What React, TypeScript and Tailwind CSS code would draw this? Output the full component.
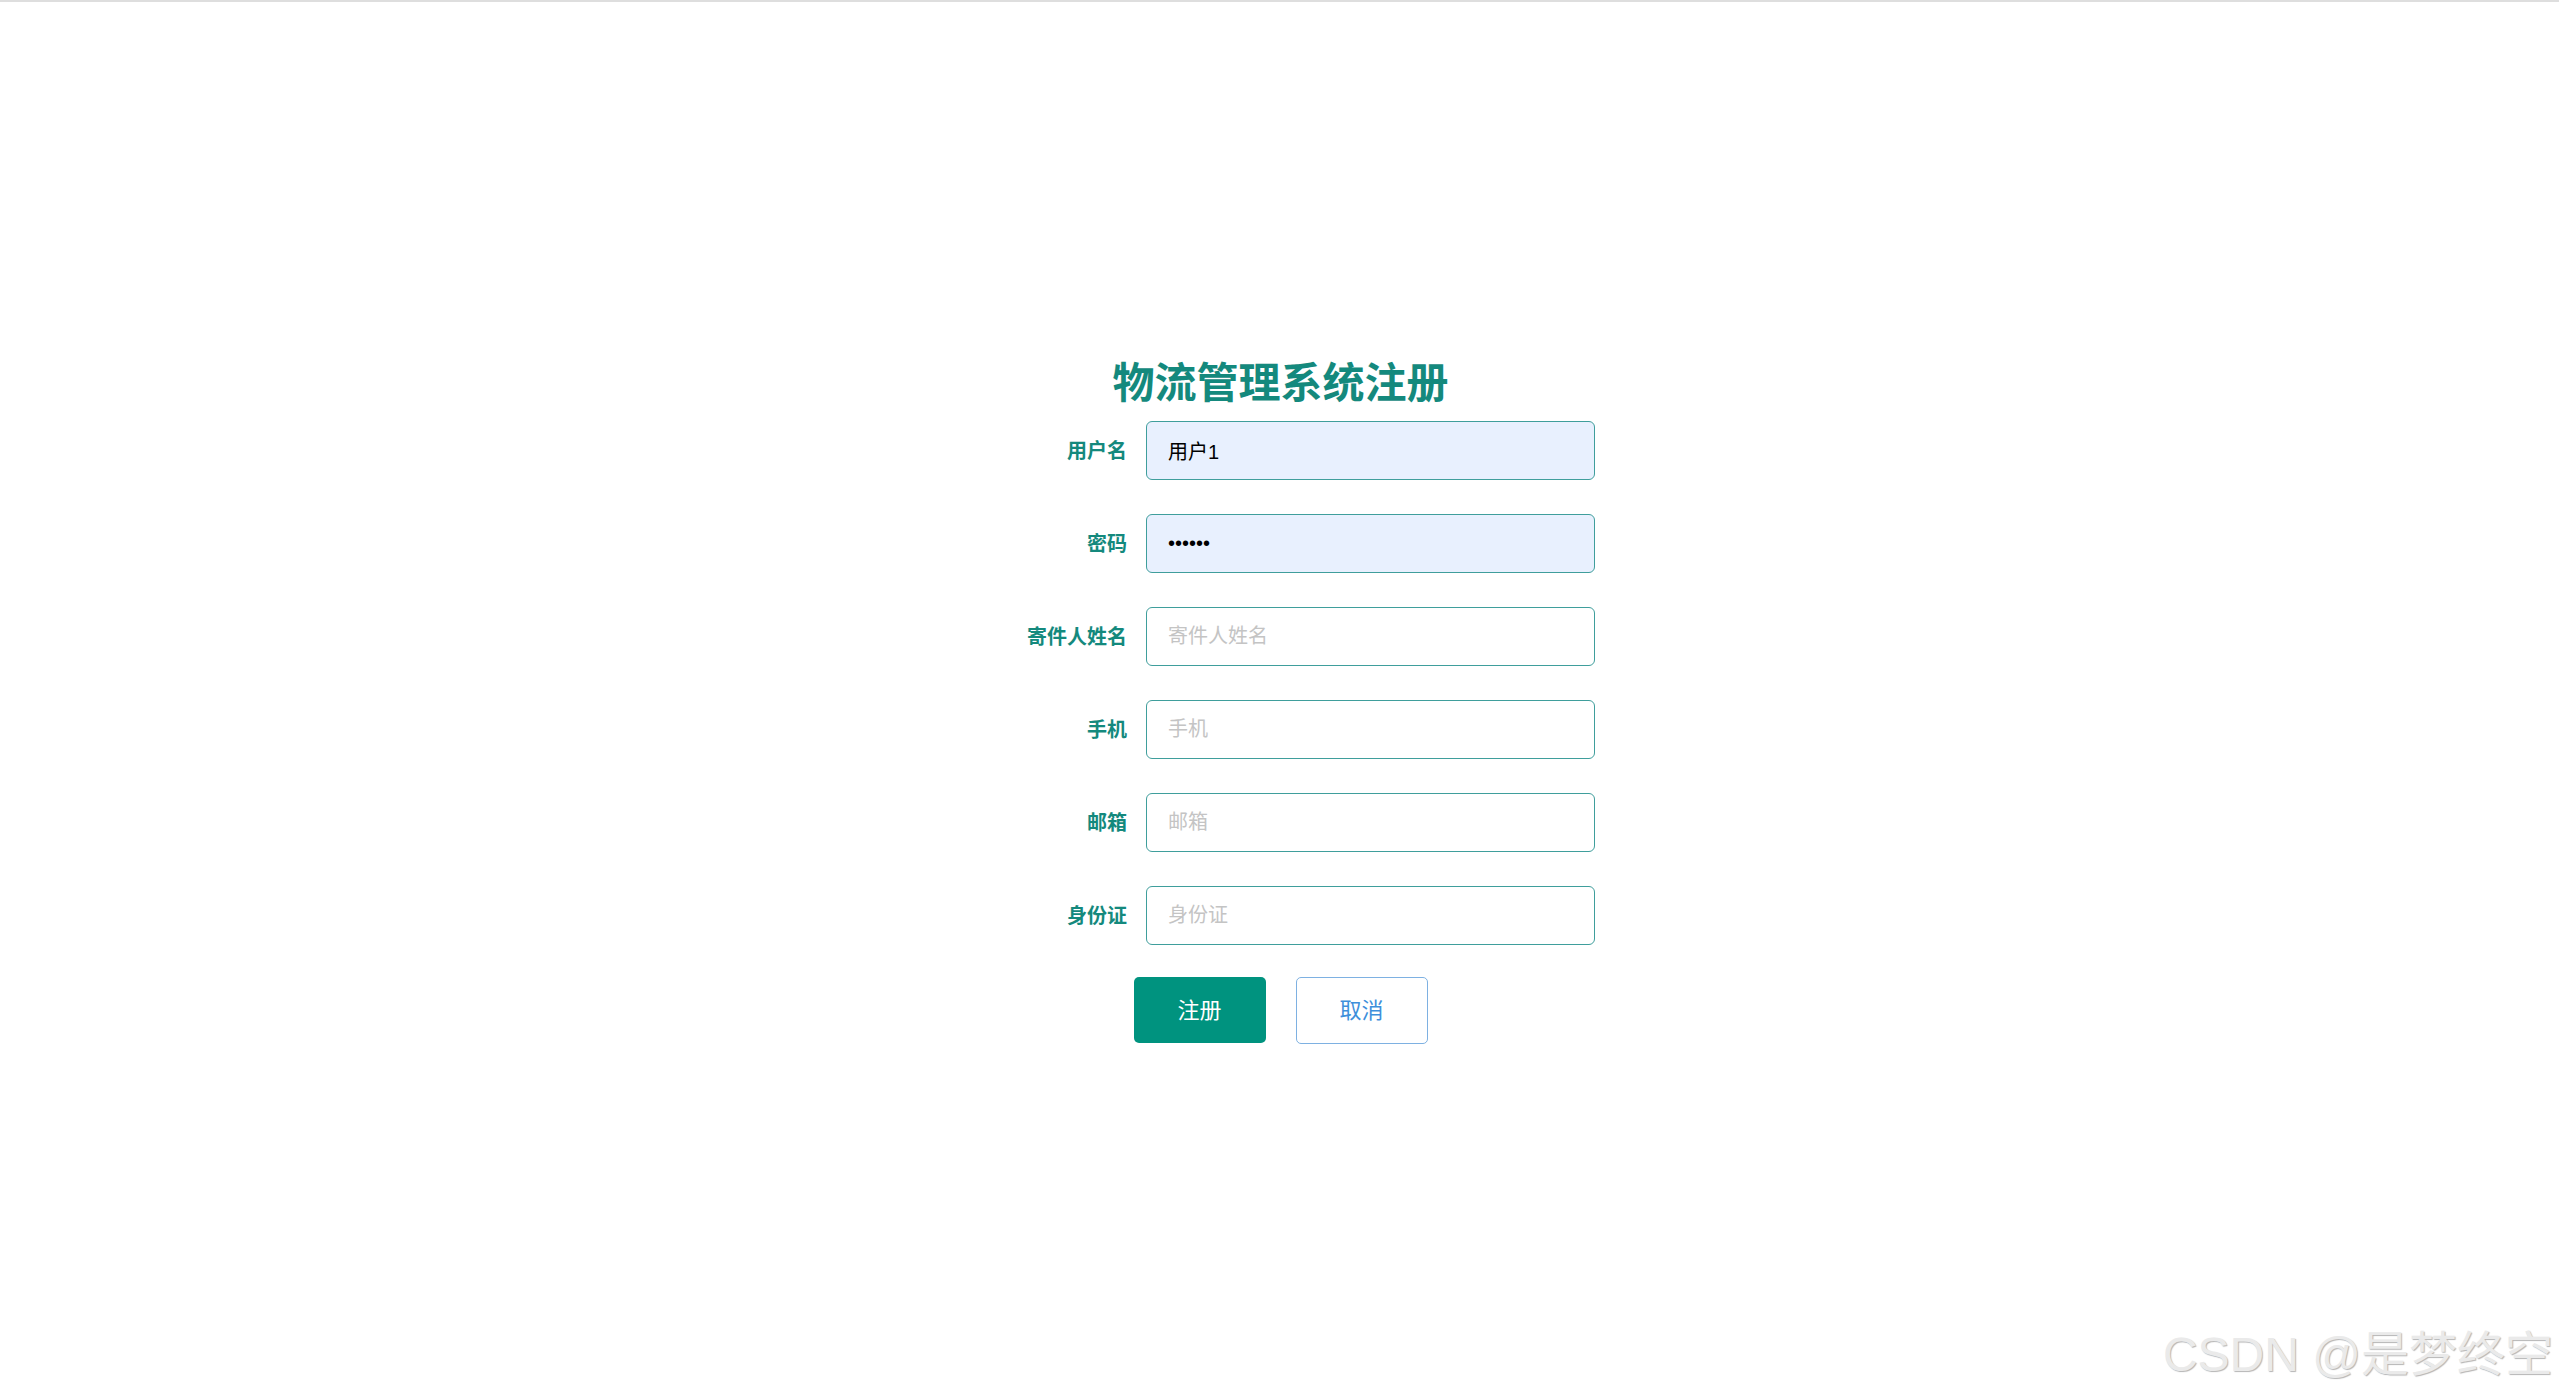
import { useState } from 'react';

const fields = [
  { label: '用户名', placeholder: '用户名', value: '用户1', type: 'text', filled: true },
  { label: '密码', placeholder: '密码', value: '123456', type: 'password', filled: true },
  { label: '寄件人姓名', placeholder: '寄件人姓名', value: '', type: 'text', filled: false },
  { label: '手机', placeholder: '手机', value: '', type: 'text', filled: false },
  { label: '邮箱', placeholder: '邮箱', value: '', type: 'text', filled: false },
  { label: '身份证', placeholder: '身份证', value: '', type: 'text', filled: false },
];

const App = () => {
  const [values, setValues] = useState(fields.map((f) => f.value));

  return (
    <div className="relative h-screen w-full overflow-hidden border-t-2 border-[#dedede] bg-white font-['Liberation_Sans','Noto_Sans_CJK_SC',sans-serif]">
      <div className="flex flex-col items-center pt-[361px]">
        <h1 className="text-[42px] font-bold leading-none text-[#14897d] translate-x-[1px]">
          物流管理系统注册
        </h1>

        <form className="mt-[16px] flex flex-col gap-[34px] translate-x-[27px]" onSubmit={(e) => e.preventDefault()}>
          {fields.map((f, i) => (
            <div key={f.label} className="flex items-center">
              <label className="w-[128px] pr-[19px] text-right text-[20px] font-bold text-[#14897d]">
                {f.label}
              </label>
              <input
                type={f.type}
                value={values[i]}
                placeholder={f.placeholder}
                onChange={(e) => {
                  const next = [...values];
                  next[i] = e.target.value;
                  setValues(next);
                }}
                className={
                  'h-[59px] w-[449px] rounded-[6px] border border-[#3f9e9c] px-[21px] text-[20px] text-black outline-none placeholder:text-[#c4c4c4] ' +
                  (f.filled ? 'bg-[#e8f0fe]' : 'bg-white')
                }
              />
            </div>
          ))}
        </form>

        <div className="mt-[32px] flex gap-[30px] translate-x-[1px]">
          <button className="h-[66px] w-[132px] rounded-[5px] bg-[#00937f] text-[22px] text-white">
            注册
          </button>
          <button className="h-[67px] w-[132px] rounded-[5px] border border-[#7eb1e2] bg-white text-[22px] text-[#3e8fdb]">
            取消
          </button>
        </div>
      </div>

      <div className="absolute bottom-[20px] right-[6px] text-[48px] leading-none text-[#eaeaea] [text-shadow:1px_1px_1px_#b5b5b5]">
        CSDN @是梦终空
      </div>
    </div>
  );
};

export default App;
